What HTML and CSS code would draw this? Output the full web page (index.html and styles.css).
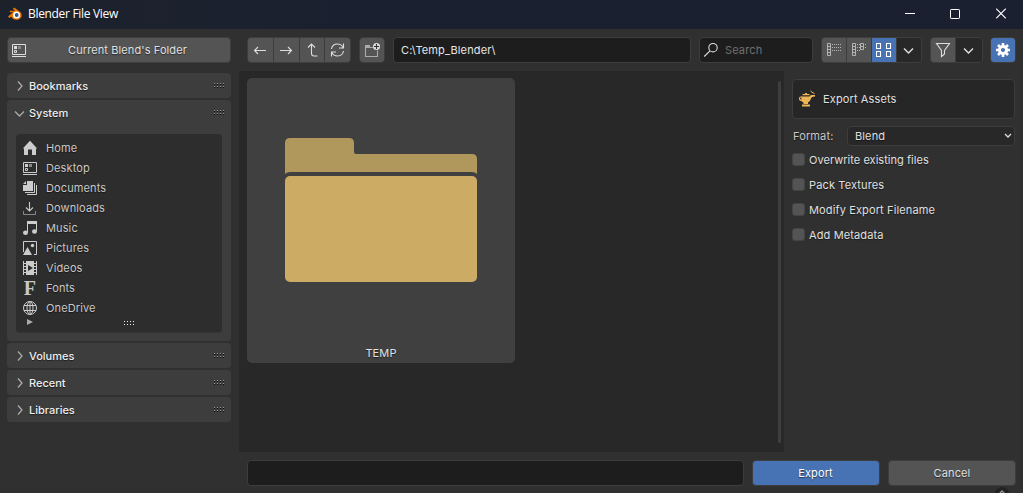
FILE: index.html
```html
<!DOCTYPE html>
<html lang="en">
<head>
<meta charset="utf-8">
<title>Blender File View</title>
<link rel="stylesheet" href="styles.css">
</head>
<body>
<div class="window">
  <header class="titlebar">
    <svg class="logo" width="16" height="14" viewBox="0 0 16 14"><path d="M1 9.500 6 5.300H2.800V3.700H8L5.800 1.700 7.200.5 13.500 5.300Q15.500 7.200 14.500 9.700 13 12.800 9.300 12.800 5.500 12.800 4.300 9.500L2.300 11Z" fill="#ea7600"/><circle cx="9.500" cy="8" r="3.500" fill="#fff"/><circle cx="9.700" cy="8" r="1.900" fill="#24568f"/></svg>
    <span class="title">Blender File View</span>
    <div class="controls">
      <svg width="10" height="12" viewBox="0 0 10 12"><path d="M0 5.500H10" stroke="#fff"/></svg>
      <svg width="10" height="12" viewBox="0 0 10 12"><rect x=".5" y="1.500" width="9" height="9" rx=".7" fill="none" stroke="#fff"/></svg>
      <svg width="10" height="12" viewBox="0 0 10 12"><path d="M.2 .7 9.800 10.300M9.800 .7.2 10.300" stroke="#fff" stroke-width="1.100"/></svg>
    </div>
  </header>
  <div class="body">
    <aside class="sidebar">
      <button class="btn current">
        <svg class="ic" width="16" height="16" viewBox="0 0 16 16"><path d="M1.500 2.500h13v10h-13z" fill="none" stroke="#ddd"/><path d="M1 14.500h14" stroke="#ddd"/><path d="M3 4h3v3H3z" fill="#ddd"/><path d="M7 4h3v3H7z" fill="#888"/><path d="M3.500 8.500h2v2h-2z" fill="none" stroke="#ddd"/></svg>
        <span>Current Blend's Folder</span>
      </button>
      <section class="panel"><svg class="chev" width="14" height="14" viewBox="0 0 14 14"><path d="m6 2.500 4 4.500-4 4.500"/></svg><span>Bookmarks</span><i class="grip"></i></section>
      <section class="panel open">
        <div class="head"><svg class="chev" width="14" height="14" viewBox="0 0 14 14"><path d="m3 5.500 4.500 4.500L12 5.500"/></svg><span>System</span><i class="grip"></i></div>
        <div class="places">
          <div class="place"><svg width="16" height="16" viewBox="0 0 16 16"><path d="M8 .7 15.200 8.500H14V15H10V9.500H6V15H2V8.500H.8Z" fill="#ccc"/></svg>Home</div>
          <div class="place"><svg width="16" height="16" viewBox="0 0 16 16"><path d="M1.500 2.500h13v10h-13z" fill="none" stroke="#ccc"/><path d="M1 14.500h14" stroke="#ccc"/><path d="M3 4h3v3H3z" fill="#ccc"/><path d="M7 4h3v3H7z" fill="#888"/><path d="M3.500 8.500h2v2h-2z" fill="none" stroke="#ccc"/></svg>Desktop</div>
          <div class="place"><svg width="16" height="16" viewBox="0 0 16 16"><path d="M5 1h6v10H1V5h4ZM1 4l3-3v3Z" fill="#ccc"/><path d="M12.500 3v9.500H3M14.500 5v9.500H5" fill="none" stroke="#ccc"/></svg>Documents</div>
          <div class="place"><svg width="16" height="16" viewBox="0 0 16 16"><path d="M7.500 2v9M4 7.500l3.500 3.500L11 7.500" fill="none" stroke="#ccc" stroke-width="1.100"/><path d="M1.500 11v3.500h12V11" fill="none" stroke="#888"/></svg>Downloads</div>
          <div class="place"><svg width="16" height="16" viewBox="0 0 16 16"><path d="M5 1h10v3H5Z" fill="#ccc"/><path d="M5.500 2v10M14.500 2v9" stroke="#ccc"/><ellipse cx="3.500" cy="12.700" rx="2.500" ry="2.200" fill="#ccc"/><ellipse cx="12.500" cy="11.500" rx="2.500" ry="2.200" fill="#ccc"/></svg>Music</div>
          <div class="place"><svg width="16" height="16" viewBox="0 0 16 16"><path d="M1.500 12V1.500h13v13H12" fill="none" stroke="#ccc"/><path d="M1 15 5.500 7 10 15Z" fill="#ccc"/><circle cx="10.500" cy="5.500" r="1.700" fill="#ccc"/></svg>Pictures</div>
          <div class="place"><svg width="16" height="16" viewBox="0 0 16 16"><path d="M1.500 1v14M14.500 1v14" stroke="#ccc"/><path d="M1 3.500h3M1 6.500h3M1 9.500h3M1 12.500h3M12 3.500h3M12 6.500h3M12 9.500h3M12 12.500h3" stroke="#ccc"/><path d="M4 1h8v14H4ZM6 5v6l5-3Z" fill="#ccc" fill-rule="evenodd"/></svg>Videos</div>
          <div class="place"><span class="fglyph">F</span>Fonts</div>
          <div class="place"><svg width="16" height="16" viewBox="0 0 16 16"><g fill="none" stroke="#ccc"><circle cx="8" cy="8" r="6.500"/><ellipse cx="8" cy="8" rx="3" ry="6.500"/><path d="M8 1.500v13M2 5.500h12M2 10.500h12"/></g></svg>OneDrive</div>
          <div class="more"><svg width="6" height="6" viewBox="0 0 6 6"><path d="M0 0 6 3 0 6Z" fill="#aaa"/></svg><i class="grip light"></i></div>
        </div>
      </section>
      <section class="panel"><svg class="chev" width="14" height="14" viewBox="0 0 14 14"><path d="m6 2.500 4 4.500-4 4.500"/></svg><span>Volumes</span><i class="grip"></i></section>
      <section class="panel"><svg class="chev" width="14" height="14" viewBox="0 0 14 14"><path d="m6 2.500 4 4.500-4 4.500"/></svg><span>Recent</span><i class="grip"></i></section>
      <section class="panel"><svg class="chev" width="14" height="14" viewBox="0 0 14 14"><path d="m6 2.500 4 4.500-4 4.500"/></svg><span>Libraries</span><i class="grip"></i></section>
    </aside>
    <main class="content">
      <div class="toolbar">
        <div class="group nav">
          <button><svg width="16" height="16" viewBox="0 0 16 16"><path d="M14 8.500H2.500M6 5 2.500 8.500 6 12"/></svg></button>
          <button><svg width="16" height="16" viewBox="0 0 16 16"><path d="M2 8.500h11.500M10 5 13.500 8.500 10 12"/></svg></button>
          <button><svg width="16" height="16" viewBox="0 0 16 16"><path d="M4 5.500 7.500 2 11 5.500M7.500 2.500v9q0 2.500 2.500 2.500H13.500"/></svg></button>
          <button><svg width="16" height="16" viewBox="0 0 16 16"><path d="M1.500 7q.8-5 6-5 3.800 0 5.700 3.500M13.500 1.500v4.500H9M13.500 9q-.8 5-6 5-3.800 0-5.700-3.500M1.500 14.500V10H6"/></svg></button>
        </div>
        <div class="group solo newdir">
          <button><svg width="18" height="16" viewBox="0 0 18 16"><path d="M2.500 4.500v10h12v-6M2 5.500h8" style="stroke:#aaa"/><path d="M2 3h5v3H2z" fill="#aaa" stroke="none"/><circle cx="13.500" cy="4.500" r="3.500" fill="#ddd" stroke="none"/><path d="M13.500 2v5M11 4.500h5" style="stroke:#333"/></svg></button>
        </div>
        <div class="field path">C:\Temp_Blender\</div>
        <div class="field search"><svg width="16" height="16" viewBox="0 0 16 16"><circle cx="10" cy="5.700" r="4.200"/><path d="M7 8.800 1.200 14.500"/></svg><span>Search</span></div>
        <div class="group views">
          <button><svg width="16" height="16" viewBox="0 0 16 16"><path d="M1.500 1.500h3v12h-3zM1.500 4.500h3M1.500 7.500h3M1.500 10.500h3" class="dim"/><path d="M6 2.500h9M6 5.500h9M6 8.500h9" class="dim dots"/></svg></button>
          <button><svg width="16" height="16" viewBox="0 0 16 16"><path d="M1.500 1.500h3v12h-3zM1.500 4.500h3M1.500 7.500h3M1.500 10.500h3M9.500 1.500h3v6h-3zM9.500 4.500h3" class="dim"/><path d="M6 2.500h3M6 5.500h3M6 8.500h3M14 2.500h2M14 5.500h2" class="dim dots"/></svg></button>
          <button class="on"><svg width="16" height="16" viewBox="0 0 16 16"><path d="M.5 1.500h4v5h-4zM10.500 1.500h4v5h-4zM.5 9.500h4v5h-4zM10.500 9.500h4v5h-4z"/></svg></button>
          <button class="dark"><svg width="16" height="16" viewBox="0 0 16 16"><path d="m3 6.500 4.500 4.500 4.500-4.500" stroke-width="1.500"/></svg></button>
        </div>
        <div class="group filter">
          <button><svg width="16" height="16" viewBox="0 0 16 16"><path d="M1.500 1.500h13L9.500 8.500v3.500l-3 2.500v-6Z"/></svg></button>
          <button class="dark"><svg width="16" height="16" viewBox="0 0 16 16"><path d="m3 6.500 4.500 4.500 4.500-4.500" stroke-width="1.500"/></svg></button>
        </div>
        <div class="group solo gear">
          <button class="on"><svg width="16" height="16" viewBox="0 0 16 16"><circle cx="8" cy="8" r="3.600" stroke-width="3"/><path d="M8 1v3M8 12v3M1 8h3M12 8h3M3 3l2 2M11 11l2 2M3 13l2-2M11 5l2-2" stroke-width="2.600"/></svg></button>
        </div>
      </div>
      <div class="middle">
        <div class="files">
          <div class="tile">
            <svg class="folder" width="192" height="144" viewBox="0 0 192 144"><path d="M0 36V5Q0 0 5 0H64Q69 0 69 5V14Q69 16 71 16H187Q192 16 192 21V36Q190 34 187 34H5Q2 34 0 36Z" fill="#b0985c"/><rect y="38" width="192" height="106" rx="5" fill="#ccac64"/></svg>
            <span>TEMP</span>
          </div>
          <div class="scroll"></div>
        </div>
        <aside class="options">
          <div class="assets"><svg width="18" height="18" viewBox="0 0 18 18"><path d="M3.500 6.500h8q.5-1.500 2-1.500h3.500v1.500Q13.500 6.500 13 8.500 12 12 10 12.500V14H5.500v-1.500Q3.500 12 3.200 10.500ZM4 14.500h8V16.500H4Z" fill="#edb557"/><path d="M4 7H2.500Q1.600 7 1.600 8.500q0 2 2 2M4.500 4.700h7M7 3.500h2" fill="none" stroke="#edb557" stroke-width="1.200"/><path d="M12.500.8 14 2.200l2.500 1.500" fill="none" stroke="#edb557"/></svg><span>Export Assets</span></div>
          <div class="format"><span>Format:</span><div class="select"><span>Blend</span><svg width="8" height="6" viewBox="0 0 8 6"><path d="m1 1 3 3 3-3" fill="none" stroke="#ddd" stroke-width="1.300"/></svg></div></div>
          <div class="check tight"><i></i>Overwrite existing files</div>
          <div class="check"><i></i>Pack Textures</div>
          <div class="check"><i></i>Modify Export Filename</div>
          <div class="check"><i></i>Add Metadata</div>
        </aside>
      </div>
      <footer class="footer">
        <div class="field name"></div>
        <button class="btn primary">Export</button>
        <button class="btn">Cancel</button>
        <div class="expander"><svg width="10" height="6" viewBox="0 0 10 6"><path d="m1 5 4-4 4 4" fill="none" stroke="#999" stroke-width="1.300"/></svg></div>
      </footer>
    </main>
  </div>
</div>
</body>
</html>
```
FILE: styles.css
```css
* { box-sizing: border-box; }
body { margin: 0; overflow: hidden; background: #303030; font: 11px/14px Inter, sans-serif; letter-spacing: .13px; color: #e0e0e0; }
svg { display: block; flex: none; }
button { border: 0; margin: 0; padding: 0; font: inherit; letter-spacing: inherit; color: inherit; }
.window { width: 1023px; height: 493px; display: flex; flex-direction: column; }
.titlebar { height: 29px; background: linear-gradient(90deg, #1c222b, #1b2030 35%, #1b2031); display: flex; align-items: center; padding: 0 17px 2px 7px; }
.title { font: 12px/16px "Open Sans", sans-serif; letter-spacing: -.32px; color: #fff; margin-left: 5px; flex: 1; }
.controls { display: flex; gap: 35px; }
.controls svg:last-child { margin-left: 1px; }
.body { flex: 1; display: flex; min-height: 0; }
.sidebar { width: 239px; padding: 8px 8px 0 7px; display: flex; flex-direction: column; gap: 2px; }
.btn { height: 26px; border: 1px solid #3d3d3d; border-radius: 4px; background: #545454; display: flex; align-items: center; justify-content: center; text-shadow: 0 1px 1px #0008; }
.current { margin-bottom: 8px; padding: 0 2px 0 3px; letter-spacing: .1px; }
.current span { flex: 1; text-align: center; }
.panel { height: 25px; background: #3d3d3d; border-radius: 4px; display: flex; align-items: center; padding: 0 6px 0 5px; color: #eee; font-weight: 500; text-shadow: 0 1px 1px #0008; letter-spacing: 0; }
.panel > span, .head > span { flex: 1; margin-left: 3px; }
.chev { fill: none; stroke: #aaa; stroke-width: 1.3; }
.grip { width: 11px; height: 5px; background: repeating-linear-gradient(90deg, #999 0 1px, transparent 1px 3px) 0 0 / 100% 1px no-repeat, repeating-linear-gradient(90deg, #080808 0 1px, transparent 1px 3px) 0 1px / 100% 1px no-repeat, repeating-linear-gradient(90deg, #999 0 1px, transparent 1px 3px) 0 3px / 100% 1px no-repeat, repeating-linear-gradient(90deg, #080808 0 1px, transparent 1px 3px) 0 4px / 100% 1px no-repeat; }
.open { display: block; height: 241px; }
.head { height: 25px; display: flex; align-items: center; }
.places { margin: 9px 3px 0 4px; height: 199px; background: #2d2d2d; border-radius: 4px; padding: 4px 6px; border-bottom: 1px solid #353535; }
.place { height: 20px; display: flex; align-items: center; gap: 8px; color: #c8c8c8; font-weight: 400; letter-spacing: .12px; }
.fglyph { width: 16px; text-align: center; font: bold 20px/20px "Liberation Serif", serif; text-shadow: none; }
.more { height: 10px; padding: 1px 0 0 5px; display: flex; align-items: flex-start; }
.light { margin: 2px 0 0 91px; background: repeating-linear-gradient(90deg, #eee 0 1px, transparent 1px 3px) 0 0 / 100% 1px no-repeat, repeating-linear-gradient(90deg, #eee 0 1px, transparent 1px 3px) 0 3px / 100% 1px no-repeat; }
.content { width: 784px; display: flex; flex-direction: column; }
.toolbar { height: 42px; padding: 8px 7px 0 8px; display: flex; }
.group { height: 26px; display: flex; gap: 1px; border: 1px solid #3d3d3d; border-radius: 4px; background: #3d3d3d; overflow: hidden; }
.group button { flex: 1; background: #545454; display: flex; align-items: center; justify-content: center; }
.group button.on { background: #4772b3; }
.group button.dark { background: #282828; }
.group svg, .search svg { fill: none; stroke: #ddd; stroke-width: 1.1; }
.group .on svg { stroke: #fff; }
.group .dim { stroke: #b4b4b4; stroke-width: 1; }
.group .dots { stroke-dasharray: 1 1; }
.nav { width: 104px; margin-right: 8px; }
.newdir { width: 26px; margin-right: 8px; }
.field { height: 26px; border: 1px solid #3d3d3d; border-radius: 4px; background: #1d1d1d; display: flex; align-items: center; color: #e6e6e6; }
.path { width: 298px; padding-left: 7px; margin-right: 8px; }
.search { width: 114px; padding-left: 3px; gap: 6px; color: #707070; margin-right: 8px; }
.views { width: 101px; margin-right: 8px; }
.filter { width: 53px; margin-right: 7px; }
.views button:not(.dark) { flex: 0 0 24px; }
.filter button:not(.dark) { flex: 0 0 24px; }
.views .dark svg, .filter .dark svg { margin-right: 1px; }
.gear { width: 26px; }
.middle { height: 381px; display: flex; }
.files { width: 545px; padding: 7px 3px 7px 8px; display: flex; justify-content: space-between; background: #282828; }
.tile { width: 268px; height: 285px; border-radius: 5px; background: #404040; display: flex; flex-direction: column; align-items: center; justify-content: space-between; padding: 60px 0 3px; text-shadow: 0 1px 1px #0008; }
.scroll { width: 3px; height: 362px; margin-top: 3px; background: #3e3e3e; border-radius: 2px; }
.options { width: 239px; padding: 8px 8px 0; text-shadow: 0 1px 1px #0008; }
.assets { height: 40px; border: 1px solid #3d3d3d; border-radius: 4px; background: #262626; display: flex; align-items: center; padding-left: 5px; gap: 7px; }
.format { height: 20px; margin: 7px 0 7px; display: flex; align-items: center; justify-content: space-between; padding-left: 1px; color: #c8c8c8; }
.select { width: 168px; height: 20px; border: 1px solid #3d3d3d; border-radius: 4px; background: #282828; display: flex; align-items: center; justify-content: space-between; padding: 0 2px 0 7px; color: #e0e0e0; }
.check { height: 14px; margin-bottom: 11px; display: flex; align-items: center; gap: 4px; }
.tight { letter-spacing: .04px; }
.check i { width: 13px; height: 13px; margin-bottom: 1px; border-radius: 3px; background: #545454; border: 1px solid #444; }
.footer { position: relative; height: 41px; padding: 8px 7px 0 8px; display: flex; overflow: hidden; }
.name { width: 497px; }
.footer .btn { width: 128px; margin-left: 8px; }
.footer .primary { background: #4772b3; color: #fff; padding-right: 1px; }
.expander { position: absolute; right: 14px; bottom: -8px; width: 14px; height: 14px; border-radius: 7px; background: #222; padding: 3px 2px; }
```
